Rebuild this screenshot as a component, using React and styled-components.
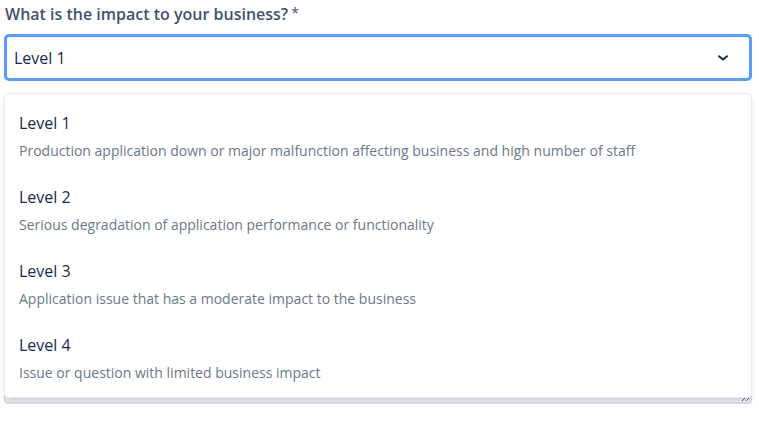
import React from 'react'
import styled, { createGlobalStyle } from 'styled-components'

const levels = [
  { title: 'Level 1', text: 'Production application down or major malfunction affecting business and high number of staff' },
  { title: 'Level 2', text: 'Serious degradation of application performance or functionality' },
  { title: 'Level 3', text: 'Application issue that has a moderate impact to the business' },
  { title: 'Level 4', text: 'Issue or question with limited business impact' }
]

function Chevron () {
  return (
    <svg width='12' height='8' viewBox='0 0 12 8'>
      <path d='M2 2.2 L6 5.6 L10 2.2' fill='none' stroke='#172b4d' strokeWidth='2' strokeLinecap='round' strokeLinejoin='round' />
    </svg>
  )
}

function App () {
  return (
    <>
      <GlobalStyle />
      <Form>
        <Label>What is the impact to your business?<Required>*</Required></Label>
        <SelectWrap>
          <Select>
            <span>Level 1</span>
            <Chevron />
          </Select>
          <Menu>
            {levels.map(l => (
              <Option key={l.title}>
                <OptionTitle>{l.title}</OptionTitle>
                <OptionText>{l.text}</OptionText>
              </Option>
            ))}
          </Menu>
        </SelectWrap>
        {/* next field, mostly covered by the open menu */}
        <Field>
          <TextArea aria-label='Description' />
        </Field>
      </Form>
    </>
  )
}

const GlobalStyle = createGlobalStyle`
  body {
    margin: 0;
    background: #fff;
    font-family: 'Open Sans', 'Noto Sans', sans-serif;
  }
`

const Form = styled.div`
  width: 748px;
  margin-left: 4px;
  padding-top: 2px;
  display: flex;
  flex-direction: column;
`

const Label = styled.div`
  font-size: 16px;
  font-weight: 600;
  line-height: 22px;
  color: #42526e;
  margin: 0 0 9px 1px;
`

const Required = styled.span`
  margin-left: 3px;
  font-size: 14px;
  font-weight: 400;
  vertical-align: 2px;
`

const SelectWrap = styled.div`
  position: relative;
`

const Select = styled.div`
  box-sizing: border-box;
  height: 47px;
  border: 3px solid #5a9bfc;
  border-radius: 5px;
  display: flex;
  align-items: center;
  justify-content: space-between;
  padding: 0 20px 0 7px;
  font-size: 16px;
  color: #172b4d;
`

const Menu = styled.div`
  position: absolute;
  top: 59px;
  left: 0;
  right: 0;
  z-index: 2;
  background: #fff;
  border: 1px solid #ebecf0;
  border-radius: 4px;
  padding: 5px 0 2px;
  box-shadow: 0 4px 6px -2px rgba(9, 30, 66, 0.28);
`

const Option = styled.div`
  display: flex;
  flex-direction: column;
  padding: 13px 14px 13px;
`

const OptionTitle = styled.div`
  font-size: 16px;
  line-height: 22px;
  color: #172b4d;
`

const OptionText = styled.div`
  margin-top: 8px;
  font-size: 14px;
  line-height: 18px;
  color: #6b778c;
`

const Field = styled.div`
  margin-top: 61px;
  display: flex;
  flex-direction: column;
`

const TextArea = styled.textarea`
  box-sizing: border-box;
  height: 262px;
  border: 2px solid #dfe1e6;
  border-radius: 4px;
  background: #fafbfc;
`

export default App
